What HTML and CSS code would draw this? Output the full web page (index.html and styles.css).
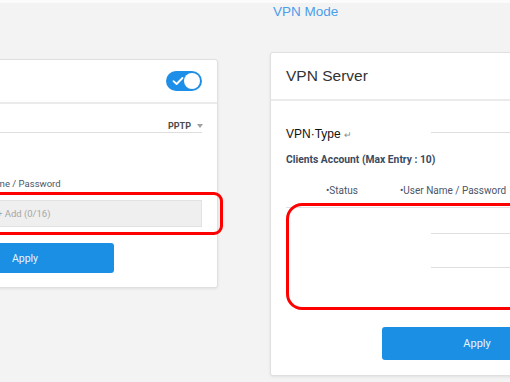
FILE: index.html
```html
<!DOCTYPE html>
<html lang="en">
<head>
  <meta charset="UTF-8" />
  <meta name="viewport" content="width=device-width, initial-scale=1.0" />
  <title>VPN Mode</title>
  <link rel="stylesheet" href="styles.css">
</head>
<body>
  <div class="strip"></div>
  <h1 class="mode-title">VPN Mode</h1>

  <div class="panels">
    <section class="card card-client">
      <div class="card-head head-client">
        <span class="toggle">
          <svg class="check" width="12" height="10" viewBox="0 0 12 10">
            <path d="M1.5 5.2 L4.6 8 L10.5 2" fill="none" stroke="#fff" stroke-width="1.8" stroke-linecap="round" stroke-linejoin="round"/>
          </svg>
          <span class="knob"></span>
        </span>
      </div>
      <div class="card-body">
        <div class="select-row">
          <div class="select">
            <span class="select-value">PPTP</span>
            <i class="caret"></i>
          </div>
        </div>
        <div class="field">
          <label class="field-label">User Name / Password</label>
          <div class="add-box">+ Add (0/16)</div>
        </div>
        <button class="apply apply-client">Apply</button>
      </div>
      <div class="mark mark-client"></div>
    </section>

    <section class="card card-server">
      <div class="card-head head-server">
        <span class="card-title">VPN Server</span>
      </div>
      <div class="card-body">
        <div class="type-row">
          <span class="type-label">VPN·Type <span class="ret">↵</span></span>
          <div class="select"></div>
        </div>
        <h3 class="accounts-title">Clients Account (Max Entry : 10)</h3>
        <div class="acct-head">
          <span class="col-status">•Status</span>
          <span class="col-user">•User Name / Password</span>
        </div>
        <div class="acct-row"><div class="acct-input"></div></div>
        <div class="acct-row"><div class="acct-input"></div></div>
        <button class="apply apply-server">Apply</button>
      </div>
      <div class="mark mark-server"></div>
    </section>
  </div>
</body>
</html>
```

FILE: styles.css
```css
* {
  box-sizing: border-box;
  margin: 0;
  padding: 0;
}

body {
  width: 510px;
  height: 382px;
  overflow: hidden;
  background-color: #f3f3f3;
  font-family: Roboto, 'Liberation Sans', Arial, sans-serif;
  color: #333;
}

.strip {
  height: 3px;
  background-color: #fbfbfb;
}

.mode-title {
  padding-left: 273px;
  font-family: 'Liberation Sans', Arial, sans-serif;
  font-size: 13.5px;
  font-weight: normal;
  line-height: 18px;
  color: #4d9ee9;
}

.panels {
  display: flex;
  align-items: flex-start;
  gap: 52px;
  margin-top: 31px;
  margin-left: -140px;
}

.card {
  position: relative;
  flex: 0 0 358px;
  background-color: #fff;
  border: 1px solid #e0e0e0;
  border-radius: 3px;
  box-shadow: 0 1px 3px rgba(0, 0, 0, 0.08);
}

.card-client {
  margin-top: 7px;
}

.card-head {
  display: flex;
  align-items: center;
  padding: 0 15px;
  border-bottom: 2px solid #ebebeb;
}

.head-client {
  height: 44px;
  justify-content: flex-end;
}

.head-server {
  height: 48px;
}

.card-title {
  font-family: 'Liberation Sans', Arial, sans-serif;
  font-size: 15.5px;
  color: #333;
}

.toggle {
  position: relative;
  display: flex;
  align-items: center;
  width: 36px;
  height: 20px;
  padding-left: 6px;
  border-radius: 10px;
  background-color: #1e8fe8;
}

.knob {
  position: absolute;
  top: 2px;
  right: 2px;
  width: 16px;
  height: 16px;
  border-radius: 50%;
  background-color: #fff;
}

.card-body {
  padding: 0 15px 14px 16px;
}

.card-server .card-body {
  padding: 0 15px 15px 15px;
}

.select-row {
  display: flex;
  margin-top: 10px;
  padding-left: 92px;
}

.select {
  flex: 1;
  display: flex;
  justify-content: flex-end;
  align-items: center;
  height: 19px;
  padding-top: 5px;
  border-bottom: 1px solid #dedede;
}

.select-value {
  font-size: 9px;
  font-weight: bold;
  line-height: 12px;
  color: #4b4b4b;
}

.caret {
  margin-left: 6px;
  margin-right: -1px;
  border-left: 3px solid transparent;
  border-right: 3px solid transparent;
  border-top: 4px solid #a0a0a0;
}

.field {
  margin-left: 86px;
  margin-top: 45px;
}

.field-label {
  display: block;
  font-size: 9.5px;
  line-height: 12px;
  color: #4a5568;
}

.add-box {
  height: 27px;
  margin-top: 10px;
  padding-left: 33px;
  border: 1px solid #e2e2e2;
  background-color: #efefef;
  font-size: 9.5px;
  line-height: 25px;
  color: #a6a6a6;
}

.apply {
  display: block;
  border: none;
  border-radius: 3px;
  background-color: #1a8fe3;
  color: #e9f4fd;
  font-family: Roboto, Arial, sans-serif;
}

.apply-client {
  width: 178px;
  height: 30px;
  margin-top: 16px;
  margin-left: 59px;
  font-size: 10.5px;
}

.apply-server {
  width: 190px;
  height: 33px;
  margin-top: 51px;
  margin-left: 96px;
  font-size: 11px;
}

.type-row {
  display: flex;
  align-items: flex-start;
  margin-top: 13px;
}

.type-label {
  width: 145px;
  margin-top: 13px;
  font-family: 'Liberation Sans', Arial, sans-serif;
  font-size: 12px;
  line-height: 14px;
  color: #111;
}

.ret {
  font-size: 9px;
  color: #888;
}

.accounts-title {
  margin-top: 12px;
  font-size: 10.3px;
  font-weight: bold;
  line-height: 12px;
  color: #3b4a5e;
}

.acct-head {
  display: flex;
  margin-top: 19px;
  padding-left: 40px;
  padding-bottom: 10px;
  border-bottom: 1px solid #e2e2e2;
  font-size: 10px;
  line-height: 12px;
  color: #4a5568;
  white-space: nowrap;
}

.col-status {
  width: 74px;
}

.acct-row {
  height: 34px;
  padding-top: 5px;
  padding-left: 145px;
}

.acct-input {
  height: 21px;
  border-bottom: 1px solid #dedede;
}

.mark {
  position: absolute;
  border: 3.5px solid #ff0000;
}

.mark-client {
  top: 132px;
  left: 119px;
  right: -6px;
  height: 43px;
  border-radius: 9px;
}

.mark-server {
  top: 150px;
  left: 15px;
  width: 340px;
  height: 107px;
  border-radius: 16px;
}
```
